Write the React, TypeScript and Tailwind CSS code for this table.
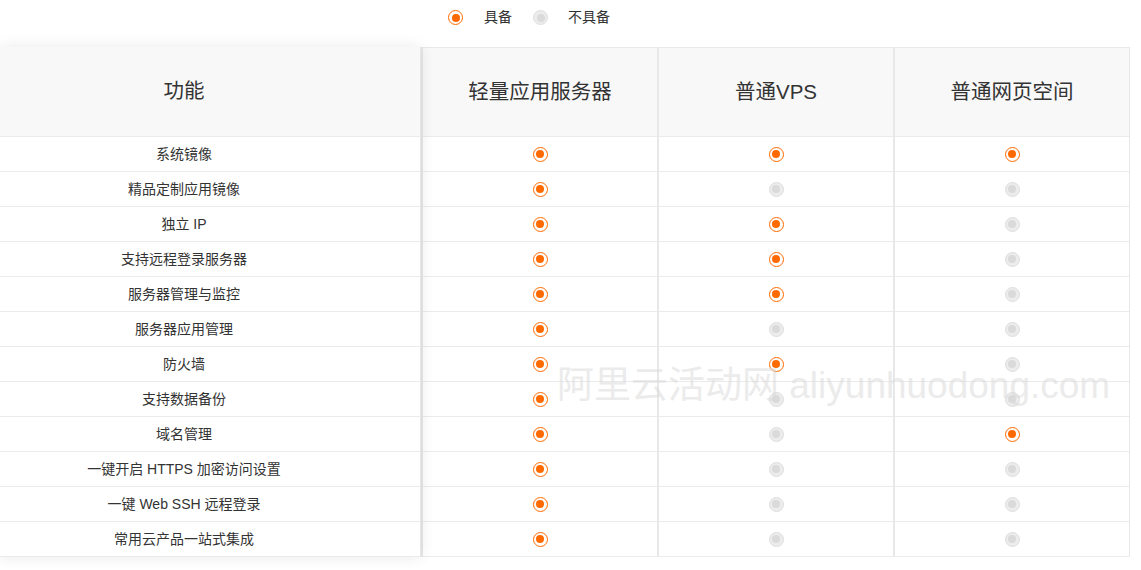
import React from 'react';

type Feature = { name: string; has: [boolean, boolean, boolean] };

const FEATURES: Feature[] = [
  { name: '系统镜像', has: [true, true, true] },
  { name: '精品定制应用镜像', has: [true, false, false] },
  { name: '独立 IP', has: [true, true, false] },
  { name: '支持远程登录服务器', has: [true, true, false] },
  { name: '服务器管理与监控', has: [true, true, false] },
  { name: '服务器应用管理', has: [true, false, false] },
  { name: '防火墙', has: [true, true, false] },
  { name: '支持数据备份', has: [true, false, false] },
  { name: '域名管理', has: [true, false, true] },
  { name: '一键开启 HTTPS 加密访问设置', has: [true, false, false] },
  { name: '一键 Web SSH 远程登录', has: [true, false, false] },
  { name: '常用云产品一站式集成', has: [true, false, false] },
];

const PRODUCTS = ['轻量应用服务器', '普通VPS', '普通网页空间'];

function Dot({ on }: { on: boolean }) {
  if (on) {
    return (
      <span className="flex h-[15px] w-[15px] items-center justify-center rounded-full border border-[#ff6a00] bg-white">
        <span className="h-[8px] w-[8px] rounded-full bg-[#ff6a00]" />
      </span>
    );
  }
  return (
    <span className="flex h-[15px] w-[15px] items-center justify-center rounded-full border border-[#dedede] bg-[#ececec]">
      <span className="h-[8px] w-[8px] rounded-full bg-[#dadada]" />
    </span>
  );
}

export default function App() {
  return (
    <div
      className="relative h-[570px] w-[1141px] overflow-hidden bg-white text-[#333]"
      style={{ fontFamily: '"Liberation Sans", "Noto Sans CJK SC", sans-serif' }}
    >
      {/* Legend */}
      <div className="flex h-[47px] items-start pl-[448px] pt-[10px] text-[14px] leading-[15px]">
        <Dot on />
        <span className="ml-[21px]">具备</span>
        <span className="ml-[21px]">
          <Dot on={false} />
        </span>
        <span className="ml-[20px]">不具备</span>
      </div>

      {/* Table */}
      <div className="flex">
        {/* Feature column card */}
        <div className="relative z-10 w-[421px] border-r border-[#e6e6e6] bg-white shadow-[0_0_14px_rgba(0,0,0,0.09)]">
          <div className="flex h-[90px] items-center justify-center border-b border-[#ebebeb] bg-[#f8f8f8] pr-[52px] text-[20.5px]">
            功能
          </div>
          {FEATURES.map((f) => (
            <div
              key={f.name}
              className="flex h-[35px] items-center justify-center border-b border-[#ebebeb] pr-[52px] text-[14px]"
            >
              {f.name}
            </div>
          ))}
        </div>

        {/* Product columns */}
        <div className="flex w-[709px] border-t border-r border-[#e8e8e8]">
          {PRODUCTS.map((p, ci) => (
            <div key={p} className="w-[236px] border-l-2 border-[#e8e8e8]">
              <div className="flex h-[89px] items-center justify-center border-b border-[#ebebeb] bg-[#f8f8f8] text-[20.5px]">
                {p}
              </div>
              {FEATURES.map((f) => (
                <div
                  key={f.name}
                  className="flex h-[35px] items-center justify-center border-b border-[#ebebeb] bg-white"
                >
                  <Dot on={f.has[ci]} />
                </div>
              ))}
            </div>
          ))}
        </div>
      </div>

      {/* Watermark */}
      <div className="pointer-events-none absolute left-[557px] top-[364px] z-20 whitespace-nowrap text-[37px] leading-[44px] text-[#d9d9d9] opacity-50">
        阿里云活动网 aliyunhuodong.com
      </div>
    </div>
  );
}
